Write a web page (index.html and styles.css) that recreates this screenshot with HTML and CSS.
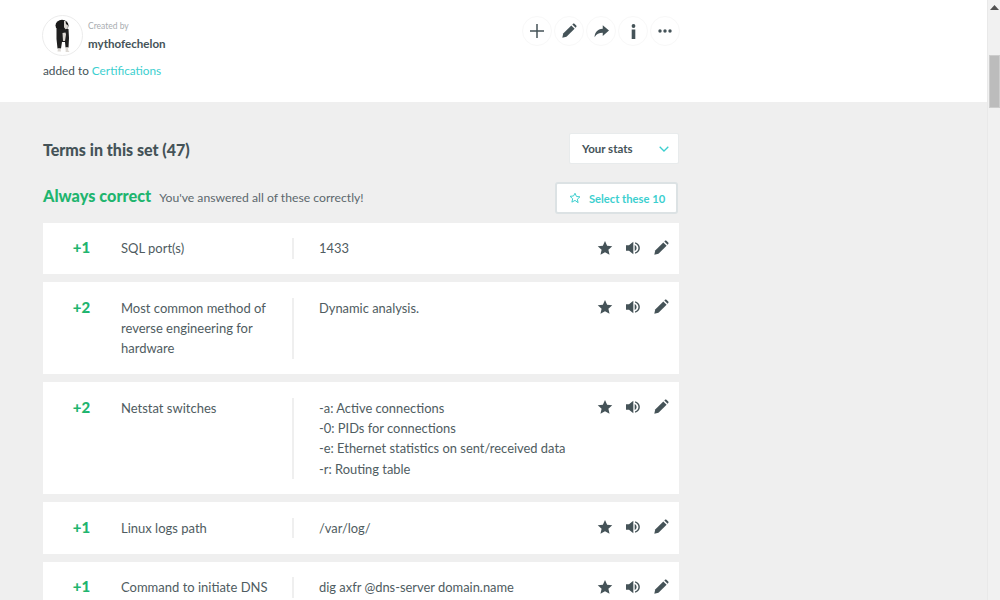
FILE: index.html
```html
<!DOCTYPE html>
<html lang="en">
<head>
<meta charset="utf-8">
<title>Terms in this set</title>
<link rel="stylesheet" href="styles.css">
</head>
<body>
<svg class="defs" width="0" height="0" aria-hidden="true">
  <defs>
    <symbol id="i-star" viewBox="0 0 24 24"><path d="M12 1.500l3.200 7.100 7.700.8-5.800 5.200 1.700 7.600L12 18.300l-6.800 3.900 1.700-7.600L1.100 9.400l7.700-.8z"/></symbol>
    <symbol id="i-sound" viewBox="0 0 24 24"><path d="M1.500 8h4.500L12.500 2.500v19L6 16H1.500z"/><path d="M14.500 7.500c1.800 1 2.800 2.500 2.800 4.500s-1 3.500-2.800 4.500z"/><path d="M15.500 3.500c4.200 1.400 6.800 4.300 6.800 8.500s-2.600 7.100-6.800 8.500l-.6-1.800c3.200-1.200 5.200-3.300 5.200-6.700s-2-5.500-5.200-6.700z"/></symbol>
    <symbol id="i-pencil" viewBox="0 0 24 24"><path d="M2 22l1.300-6.200L15.500 3.600l4.900 4.900L8.200 20.700z"/><path d="M17 2.100l1-1c.6-.6 1.500-.6 2.100 0l2.800 2.800c.6.600.6 1.500 0 2.100l-1 1z"/></symbol>
  </defs>
</svg>
<div class="window">
  <div class="page">
    <header class="head">
      <div class="head-left">
        <div class="creator">
          <div class="avatar">
            <svg width="16" height="34" viewBox="0 0 16 34">
              <ellipse cx="7" cy="6.500" rx="6.500" ry="5.700" fill="#1a1a1a"/>
              <path fill="#1f1f1f" d="M1.500 10h12l.5 9-.5 9.500h-3l-.5-5.500H7l-1 6.500H2.500L1.500 20z"/>
              <path fill="#dcd8d3" d="M9 2h1.500l.5 3 2 1.500-.3 3-2.200.8-1.500-2zM7.500 14l3-.5.5 2-1 6.500H8zM3 29.500h2.500l.5 3H2.500zM10.500 28.500H13l.3 3 1.200 1.500h-3.800z"/>
            </svg>
          </div>
          <div class="creator-text">
            <span class="created">Created by</span>
            <span class="user">mythofechelon</span>
          </div>
        </div>
        <p class="added">added to <a class="link">Certifications</a></p>
      </div>
      <div class="actions">
        <span class="act"><svg width="16" height="16" viewBox="0 0 16 16"><path d="M8 1v14M1 8h14" stroke="#455358" stroke-width="1.500" fill="none"/></svg></span>
        <span class="act"><svg class="ico-act" width="16" height="16"><use href="#i-pencil"/></svg></span>
        <span class="act"><svg class="ico-act" width="15" height="13" viewBox="0 0 24 20"><path d="M14 0l10 8.500L14 17v-5C8 12 4 14 1 19c0-7 4-13 13-13.500z"/></svg></span>
        <span class="act"><svg class="ico-act" width="5" height="15" viewBox="0 0 5 15"><circle cx="2.500" cy="2" r="1.900"/><path d="M.7 5.500h3.600V15H.7z"/></svg></span>
        <span class="act"><svg class="ico-act" width="14" height="4" viewBox="0 0 14 4"><circle cx="2" cy="2" r="1.700"/><circle cx="7" cy="2" r="1.700"/><circle cx="12" cy="2" r="1.700"/></svg></span>
      </div>
    </header>
    <main class="body">
      <div class="title-row">
        <h2 class="title">Terms in this set (47)</h2>
        <div class="select">
          <span>Your stats</span>
          <svg width="10" height="6" viewBox="0 0 10 6"><path d="M.7.7L5 5l4.300-4.300" fill="none" stroke="#3ccfcf" stroke-width="1.300"/></svg>
        </div>
      </div>
      <div class="group-row">
        <div class="group-title">
          <h3 class="always">Always correct</h3>
          <span class="hint">You've answered all of these correctly!</span>
        </div>
        <button class="btn">
          <svg width="12" height="12" viewBox="0 0 24 24"><path d="M12 2.500l2.900 6.400 7 .8-5.200 4.700 1.500 6.900L12 16.800l-6.200 3.500 1.500-6.900-5.200-4.700 7-.8z" fill="none" stroke="#3ccfcf" stroke-width="2"/></svg>
          Select these 10
        </button>
      </div>
      <div class="rows">
        <section class="row">
          <div class="score">+1</div>
          <div class="term">SQL port(s)</div>
          <div class="def">1433</div>
          <div class="tools"><svg><use href="#i-star"/></svg><svg><use href="#i-sound"/></svg><svg><use href="#i-pencil"/></svg></div>
        </section>
        <section class="row">
          <div class="score">+2</div>
          <div class="term">Most common method of reverse engineering for hardware</div>
          <div class="def">Dynamic analysis.</div>
          <div class="tools"><svg><use href="#i-star"/></svg><svg><use href="#i-sound"/></svg><svg><use href="#i-pencil"/></svg></div>
        </section>
        <section class="row">
          <div class="score">+2</div>
          <div class="term">Netstat switches</div>
          <div class="def">-a: Active connections<br>-0: PIDs for connections<br>-e: Ethernet statistics on sent/received data<br>-r: Routing table</div>
          <div class="tools"><svg><use href="#i-star"/></svg><svg><use href="#i-sound"/></svg><svg><use href="#i-pencil"/></svg></div>
        </section>
        <section class="row">
          <div class="score">+1</div>
          <div class="term">Linux logs path</div>
          <div class="def">/var/log/</div>
          <div class="tools"><svg><use href="#i-star"/></svg><svg><use href="#i-sound"/></svg><svg><use href="#i-pencil"/></svg></div>
        </section>
        <section class="row">
          <div class="score">+1</div>
          <div class="term">Command to initiate DNS</div>
          <div class="def">dig axfr @dns-server domain.name</div>
          <div class="tools"><svg><use href="#i-star"/></svg><svg><use href="#i-sound"/></svg><svg><use href="#i-pencil"/></svg></div>
        </section>
      </div>
    </main>
  </div>
  <aside class="scrollbar">
    <svg class="arrow" width="9" height="5" viewBox="0 0 9 5"><path d="M4.500 0L9 5H0z" fill="#505050"/></svg>
    <div class="thumb"></div>
  </aside>
</div>
</body>
</html>
```
FILE: styles.css
```css
* { box-sizing: border-box; }
html, body { margin: 0; height: 100%; overflow: hidden; }
body { font-family: Lato, "Open Sans", Arial, sans-serif; color: #455358; background: #efefef; }
.defs { position: absolute; }
.window { display: flex; height: 600px; width: 1000px; overflow: hidden; }
.page { width: 987px; flex: none; height: 600px; overflow: hidden; }

.head { height: 102px; background: #fff; padding: 15px 307px 0 42px; display: flex; justify-content: space-between; align-items: flex-start; }
.creator { display: flex; align-items: center; gap: 4px; }
.avatar { width: 41px; height: 41px; border-radius: 50%; border: 1px solid #ececec; display: flex; align-items: center; justify-content: center; flex: none; }
.creator-text { display: flex; flex-direction: column; margin-left: 1px; }
.created { font-size: 8.500px; color: #a9adb1; line-height: 12px; }
.user { font-size: 11.600px; font-weight: 700; line-height: 14px; margin-top: 5px; color: #455358; }
.added { margin: 7px 0 0 1px; font-size: 11.800px; line-height: 16px; }
.link { color: #3ccfcf; }

.actions { display: flex; gap: 2px; padding-top: 1px; }
.act { width: 30px; height: 30px; border: 1px solid #f8f8f8; border-radius: 50%; display: flex; align-items: center; justify-content: center; }
.ico-act { fill: #455358; }

.body { padding: 31px 0 0 43px; width: 679px; }
.title-row { display: flex; justify-content: space-between; align-items: center; height: 31px; }
.title { margin: 3px 0 0; font-size: 16px; font-weight: 900; line-height: 20px; color: #455358; }
.select { width: 110px; height: 31px; background: #fff; border: 1px solid #e8ebec; border-radius: 2px; display: flex; align-items: center; justify-content: space-between; padding: 0 9px 0 12px; font-size: 11.500px; font-weight: 700; }

.group-row { display: flex; justify-content: space-between; align-items: center; margin-top: 18px; height: 32px; padding-right: 1px; }
.group-title { display: flex; align-items: baseline; gap: 8px; margin-bottom: 4px; }
.always { margin: 0; font-size: 16.300px; font-weight: 900; color: #1fb56f; line-height: 20px; }
.hint { font-size: 12.200px; color: #5c686d; }
.btn { width: 123px; height: 32px; background: #fff; border: 2px solid #dce2e4; border-radius: 3px; display: flex; align-items: center; gap: 8px; padding: 0 0 0 12px; font: 700 11.200px Lato, Arial, sans-serif; color: #3ccfcf; }

.rows { display: flex; flex-direction: column; gap: 8.100px; margin-top: 8.700px; }
.row { background: #fff; display: grid; grid-template-columns: 78px 171px 1fr 96px; padding: 15.600px 0 15.400px; }
.score { font-size: 15px; font-weight: 900; color: #1fb56f; text-align: center; line-height: 20px; padding-right: 1px; margin-top: -1px; }
.term, .def { font-size: 13px; line-height: 20.300px; color: #4f5c61; }
.term { padding-right: 20px; }
.def { border-left: 2px solid #efefef; padding-left: 25px; font-size: 12.900px; }
.tools { display: flex; gap: 12px; align-items: flex-start; padding: 0 10.500px 0 0; justify-content: flex-end; margin-top: 1.500px; }
.tools svg { width: 16px; height: 16px; fill: #455358; flex: none; }

.scrollbar { flex: 1; background: #f1f1f1; border-left: 1px solid #e9e9e9; display: flex; flex-direction: column; align-items: center; }
.arrow { margin-top: 5px; }
.thumb { width: 11px; height: 53px; margin-top: 45px; background: #bcbcbc; border: 1px solid #cdcdcd; }
```
